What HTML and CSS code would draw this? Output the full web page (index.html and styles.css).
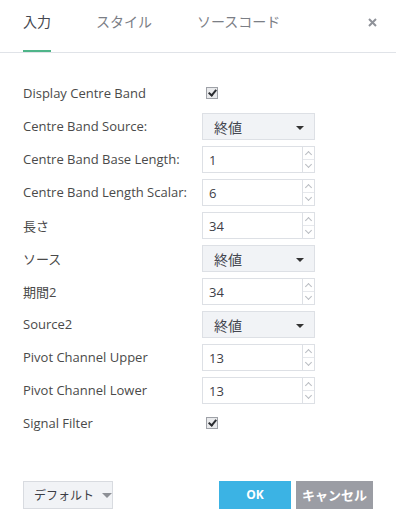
FILE: index.html
```html
<!doctype html>
<html lang="ja">
  <head>
    <meta charset="utf-8"/>
    <title>入力</title>
    <link rel="stylesheet" href="styles.css">
  </head>
  <body>
    <div class="dialog">
      <div class="tab-bar">
        <div class="tab active">入力</div>
        <div class="tab">スタイル</div>
        <div class="tab">ソースコード</div>
        <div class="close">
          <svg width="9" height="9" viewBox="0 0 9 9"><path d="M1 1L8 8M8 1L1 8" stroke="#8f9299" stroke-width="2"/></svg>
        </div>
      </div>
      <div class="form">
        <div class="label">Display Centre Band</div>
        <div class="cell short"><span class="check"></span></div>

        <div class="label">Centre Band Source:</div>
        <div class="select">終値<span class="caret"></span></div>

        <div class="label">Centre Band Base Length:</div>
        <div class="spin"><span class="value">1</span><span class="arrows"><i class="up"></i><i class="down"></i></span></div>

        <div class="label">Centre Band Length Scalar:</div>
        <div class="spin"><span class="value">6</span><span class="arrows"><i class="up"></i><i class="down"></i></span></div>

        <div class="label">長さ</div>
        <div class="spin"><span class="value">34</span><span class="arrows"><i class="up"></i><i class="down"></i></span></div>

        <div class="label">ソース</div>
        <div class="select">終値<span class="caret"></span></div>

        <div class="label">期間2</div>
        <div class="spin"><span class="value">34</span><span class="arrows"><i class="up"></i><i class="down"></i></span></div>

        <div class="label">Source2</div>
        <div class="select">終値<span class="caret"></span></div>

        <div class="label">Pivot Channel Upper</div>
        <div class="spin"><span class="value">13</span><span class="arrows"><i class="up"></i><i class="down"></i></span></div>

        <div class="label">Pivot Channel Lower</div>
        <div class="spin"><span class="value">13</span><span class="arrows"><i class="up"></i><i class="down"></i></span></div>

        <div class="label">Signal Filter</div>
        <div class="cell short"><span class="check"></span></div>
      </div>
      <div class="footer">
        <div class="default-btn">デフォルト<span class="caret grey"></span></div>
        <div class="actions">
          <div class="btn ok">OK</div>
          <div class="btn cancel">キャンセル</div>
        </div>
      </div>
    </div>
  </body>
</html>
```

FILE: styles.css
```css
* {
  box-sizing: border-box;
}
body {
  margin: 0;
  background: #ffffff;
  font-family: "Open Sans", "Noto Sans CJK JP", sans-serif;
  color: #4a4a4a;
}
.dialog {
  width: 396px;
  height: 532px;
  display: flex;
  flex-direction: column;
}
.tab-bar {
  display: flex;
  align-items: flex-start;
  height: 53px;
  padding-left: 23px;
  border-bottom: 1px solid #e0e3e8;
}
.tab {
  font-size: 14px;
  line-height: 20px;
  padding-top: 12px;
  height: 52px;
  margin-right: 45px;
  color: #7b7e85;
}
.tab.active {
  color: #444750;
  border-bottom: 2px solid #4fb589;
}
.close {
  margin-left: auto;
  margin-right: 19px;
  padding-top: 18px;
}
.close svg {
  display: block;
}
.form {
  display: grid;
  grid-template-columns: 179px 113px;
  grid-auto-rows: 27px;
  row-gap: 6px;
  padding: 27px 0 0 23px;
  font-size: 13px;
}
.label {
  display: flex;
  align-items: center;
  white-space: nowrap;
  padding-bottom: 1px;
}
.form > .label:first-child,
.form > .short {
  height: 26px;
}
.cell {
  display: flex;
  align-items: center;
  padding-left: 4px;
}
.check {
  width: 12px;
  height: 12px;
  border: 1px solid #9ea1a7;
  background: #e9eaec;
  position: relative;
}
.check::after {
  content: '';
  position: absolute;
  left: 3px;
  top: 0px;
  width: 3px;
  height: 6px;
  border: solid #2b2d31;
  border-width: 0 2px 2px 0;
  transform: rotate(40deg);
}
.select {
  display: flex;
  align-items: center;
  justify-content: space-between;
  padding: 0 10px 0 11px;
  background: #f1f3f6;
  border: 1px solid #dde0e5;
  font-size: 14px;
  color: #444750;
}
.caret {
  width: 0;
  height: 0;
  border-left: 4px solid transparent;
  border-right: 4px solid transparent;
  border-top: 4px solid #333333;
  margin-top: 2px;
}
.caret.grey {
  border-left-width: 5px;
  border-right-width: 5px;
  border-top: 5px solid #8d9096;
  margin-left: 8px;
  margin-top: 0;
}
.spin {
  display: flex;
  border: 1px solid #dde0e5;
  background: #ffffff;
}
.spin .value {
  flex: 1;
  display: flex;
  align-items: center;
  padding-left: 6px;
  font-size: 13px;
  color: #3e4047;
}
.arrows {
  width: 12px;
  border-left: 1px solid #dde0e5;
  display: flex;
  flex-direction: column;
}
.arrows i {
  flex: 1;
  position: relative;
}
.arrows i.up {
  border-bottom: 1px solid #e6e8ec;
}
.arrows i::after {
  content: '';
  position: absolute;
  left: 3px;
  width: 4px;
  height: 4px;
  border: solid #b9bcc2;
  border-width: 1px 0 0 1px;
}
.arrows i.up::after {
  top: 5px;
  transform: rotate(45deg);
}
.arrows i.down::after {
  top: 2px;
  transform: rotate(225deg);
}
.footer {
  display: flex;
  justify-content: space-between;
  padding: 0 23px;
  margin-top: 44px;
}
.default-btn {
  display: flex;
  align-items: center;
  white-space: nowrap;
  height: 28px;
  width: 90px;
  padding-left: 10px;
  background: #f1f3f6;
  border: 1px solid #d8dbe0;
  font-size: 12px;
  color: #3b3d44;
}
.actions {
  display: flex;
  gap: 5px;
}
.btn {
  height: 28px;
  display: flex;
  align-items: center;
  justify-content: center;
  color: #ffffff;
  font-weight: bold;
  font-size: 12px;
  padding-bottom: 2px;
}
.ok {
  width: 72px;
  background: #3bb3e4;
}
.cancel {
  width: 77px;
  background: #9b9da4;
  font-size: 13px;
}
```
